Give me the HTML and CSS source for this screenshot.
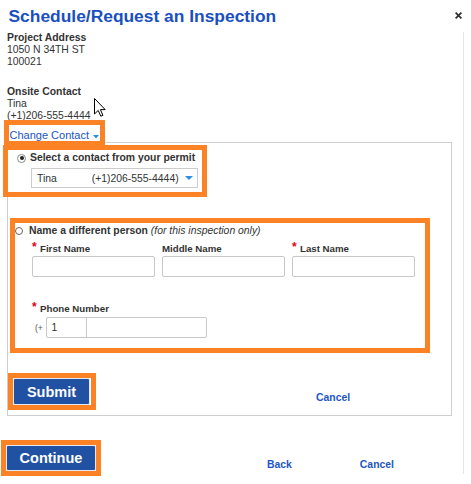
FILE: index.html
```html
<!DOCTYPE html>
<html>
<head>
<meta charset="utf-8">
<title>Schedule/Request an Inspection</title>
<link rel="stylesheet" href="styles.css">
</head>
<body>
<div class="dialog">
  <header class="title-bar">
    <h1 class="title">Schedule/Request an Inspection</h1>
    <svg class="close" width="7" height="7" viewBox="0 0 7 7"><path d="M0.6 0.6 L6.4 6.4 M6.4 0.6 L0.6 6.4" stroke="#333" stroke-width="1.8" fill="none"/></svg>
  </header>
  <div class="dialog-body">
    <div class="info-block">
      <div class="info-label">Project Address</div>
      <div>1050 N 34TH ST</div>
      <div>100021</div>
    </div>
    <div class="info-block">
      <div class="info-label">Onsite Contact</div>
      <div>Tina</div>
      <div>(+1)206-555-4444</div>
    </div>
    <div class="change-link">
      <span>Change Contact</span>
      <svg class="caret-small" width="6" height="4" viewBox="0 0 6 4"><path d="M0 0 L6 0 L3 3.5 Z" fill="#2a8ee6"/></svg>
    </div>
    <div class="panel">
      <div class="opt-head opt-first">
        <span class="radio radio-on"></span>
        <span>Select a contact from your permit</span>
      </div>
      <div class="select">
        <span>Tina</span>
        <span class="select-phone">(+1)206-555-4444)</span>
        <svg class="caret" width="8" height="4" viewBox="0 0 8 4"><path d="M0 0 L8 0 L4 4 Z" fill="#2a8ee6"/></svg>
      </div>
      <div class="opt-head opt-second">
        <span class="radio radio-off"></span>
        <span>Name a different person <span class="note">(for this inspection only)</span></span>
      </div>
      <div class="fields">
        <div class="field">
          <div class="field-label"><span class="req">*</span>First Name</div>
          <div class="input"></div>
        </div>
        <div class="field">
          <div class="field-label">Middle Name</div>
          <div class="input"></div>
        </div>
        <div class="field">
          <div class="field-label"><span class="req">*</span>Last Name</div>
          <div class="input"></div>
        </div>
      </div>
      <div class="phone-field">
        <div class="field-label phone-label"><span class="req">*</span>Phone Number</div>
        <div class="phone-row">
          <span class="prefix">(+</span>
          <div class="phone-input">
            <span class="cc">1</span>
            <span class="num"></span>
          </div>
        </div>
      </div>
      <div class="panel-actions">
        <span class="btn btn-submit">Submit</span>
        <span class="link link-cancel1">Cancel</span>
      </div>
    </div>
    <div class="footer-actions">
      <span class="btn btn-continue">Continue</span>
      <span class="link link-back">Back</span>
      <span class="link link-cancel2">Cancel</span>
    </div>
  </div>

  <div class="hl hl-change"></div>
  <div class="hl hl-select"></div>
  <div class="hl hl-name"></div>
  <div class="hl hl-submit"></div>
  <div class="hl hl-continue"></div>

  <svg class="cursor" width="12" height="19" viewBox="0 0 12 19"><path d="M0.5 0.5 L0.5 16 L4.2 12.4 L6.8 18.2 L8.9 17.3 L6.4 11.6 L11.2 11.6 Z" fill="#fff" stroke="#000" stroke-width="1" stroke-linejoin="miter"/></svg>
</div>
</body>
</html>
```
FILE: styles.css
```css
* { box-sizing: border-box; }
html, body { margin: 0; padding: 0; background: #fff; }
body {
  font-family: "Liberation Sans", Arial, sans-serif;
  color: #333;
  width: 471px;
  height: 484px;
  overflow: hidden;
}
.dialog { position: relative; width: 471px; height: 484px; }

.title-bar { display: flex; align-items: flex-start; padding-top: 6px; height: 26px; }
.title {
  margin: 0 0 0 8.5px;
  font-size: 17.4px;
  line-height: 20px;
  font-weight: bold;
  color: #1a4fc0;
}
.close { margin: 6px 9px 0 auto; display: block; }

.dialog-body {
  margin-top: 6px;
  width: 464px;
  height: 442px;
  padding-left: 7px;
  border-right: 1px solid #e4e4e4;
}

.info-block { font-size: 10.4px; line-height: 12px; color: #333; }
.info-block + .info-block { margin-top: 18.4px; }
.info-label { font-weight: bold; }

.change-link {
  display: flex;
  align-items: center;
  margin-top: 7px;
  height: 13px;
  padding-left: 2.5px;
  font-size: 11px;
  line-height: 13px;
  color: #1a55c2;
}
.caret-small { margin-left: 3.5px; margin-top: 2px; display: block; }

.panel {
  width: 445px;
  height: 274px;
  border: 1px solid #cfcfcf;
}

.opt-head {
  display: flex;
  align-items: center;
  height: 12px;
  font-size: 10.4px;
  line-height: 12px;
  font-weight: bold;
  color: #333;
  white-space: nowrap;
}
.opt-first { margin-top: 9px; padding-left: 9px; gap: 4px; }
.opt-second { margin-top: 37px; padding-left: 7px; gap: 6px; }
.note { font-weight: normal; font-style: italic; }

.radio {
  display: flex;
  align-items: center;
  justify-content: center;
  border-radius: 50%;
  background: #fff;
  flex: none;
}
.radio-on { width: 9px; height: 9px; border: 1px solid #8a8a8a; }
.radio-on::after { content: ""; width: 4px; height: 4px; border-radius: 50%; background: #222; }
.radio-off { width: 8px; height: 8px; border: 1px solid #666; }

.select {
  display: flex;
  align-items: center;
  margin: 4px 0 0 23px;
  width: 167px;
  height: 20px;
  border: 1px solid #cccccc;
  padding: 0 3.7px 0 5px;
  font-size: 10.4px;
  color: #333;
}
.select-phone { margin-left: auto; }
.caret { margin-left: 6.7px; display: block; }

.fields {
  display: grid;
  grid-template-columns: repeat(3, 123px);
  column-gap: 7px;
  margin: 5.5px 0 0 24px;
}
.field-label {
  height: 12px;
  line-height: 12px;
  font-size: 9.7px;
  font-weight: bold;
  color: #333;
  margin-bottom: 1.5px;
  white-space: nowrap;
}
.req {
  display: inline-block;
  width: 8px;
  color: #e8001c;
  font-size: 12px;
  line-height: 0;
  vertical-align: 0.5px;
}
.input {
  height: 21px;
  border: 1px solid #c8c8c8;
  border-radius: 2px;
  background: #fff;
}

.phone-field { margin: 25.5px 0 0 24px; }
.phone-label { margin-bottom: 2.5px; }
.phone-row { display: flex; align-items: center; height: 21px; }
.prefix { padding-left: 3px; width: 14px; font-size: 8.5px; color: #555; }
.phone-input {
  display: flex;
  width: 161px;
  height: 21px;
  border: 1px solid #c8c8c8;
  border-radius: 2px;
}
.cc {
  width: 40px;
  border-right: 1px solid #c8c8c8;
  padding-left: 4.5px;
  font-size: 10.4px;
  line-height: 19px;
  color: #333;
}
.num { flex: 1; }

.btn {
  display: flex;
  align-items: center;
  justify-content: center;
  background: #2151a2;
  border: 1px solid #e3e8f1;
  border-radius: 2px;
  color: #fff;
  font-weight: bold;
  font-size: 14.5px;
}
.link {
  font-size: 10.4px;
  line-height: 12px;
  font-weight: bold;
  color: #1d56c2;
  align-self: flex-end;
}

.panel-actions { display: flex; margin-top: 40px; padding-left: 5px; }
.btn-submit { width: 77px; height: 27px; }
.link-cancel1 { margin-left: 226px; margin-bottom: 1px; }

.footer-actions { display: flex; margin-top: 29px; }
.btn-continue { margin-left: -1px; width: 90px; height: 26px; }
.link-back { margin-left: 171px; }
.link-cancel2 { margin-left: 68px; }

/* annotation highlight boxes laid over the dialog */
.hl { position: absolute; border: 5px solid #fc8226; pointer-events: none; }
.hl-change { left: 4px; top: 120px; width: 101px; height: 26px; }
.hl-select { left: 3px; top: 145px; width: 204px; height: 52px; }
.hl-name { left: 10px; top: 218px; width: 420px; height: 135px; }
.hl-submit { left: 8px; top: 373px; width: 88px; height: 37px; }
.hl-continue { left: 1px; top: 440px; width: 100px; height: 36px; }

.cursor { position: absolute; left: 94px; top: 98px; display: block; }
```
